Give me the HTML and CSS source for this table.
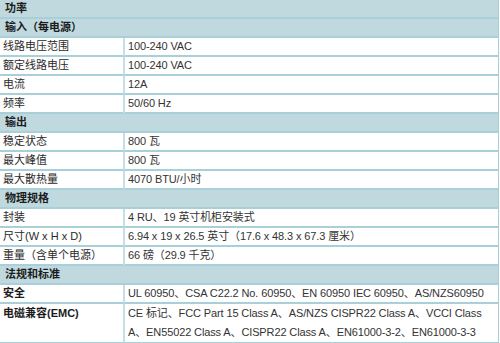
FILE: index.html
```html
<!DOCTYPE html>
<html lang="zh-CN">
<head>
    <meta charset="UTF-8">
    <title>功率规格</title>
    <link rel="stylesheet" href="styles.css">
</head>
<body>
    <table class="spec">
        <tr class="section"><td colspan="2">功率</td></tr>
        <tr class="section"><td colspan="2">输入（每电源）</td></tr>
        <tr><td class="label">线路电压范围</td><td class="value">100-240 VAC</td></tr>
        <tr><td class="label">额定线路电压</td><td class="value">100-240 VAC</td></tr>
        <tr><td class="label">电流</td><td class="value">12A</td></tr>
        <tr><td class="label">频率</td><td class="value">50/60 Hz</td></tr>
        <tr class="section"><td colspan="2">输出</td></tr>
        <tr><td class="label">稳定状态</td><td class="value">800 瓦</td></tr>
        <tr><td class="label">最大峰值</td><td class="value">800 瓦</td></tr>
        <tr><td class="label">最大散热量</td><td class="value">4070 BTU/小时</td></tr>
        <tr class="section"><td colspan="2">物理规格</td></tr>
        <tr><td class="label">封装</td><td class="value">4 RU、19 英寸机柜安装式</td></tr>
        <tr><td class="label">尺寸(W x H x D)</td><td class="value">6.94 x 19 x 26.5 英寸（17.6 x 48.3 x 67.3 厘米）</td></tr>
        <tr><td class="label">重量（含单个电源）</td><td class="value">66 磅（29.9 千克）</td></tr>
        <tr class="section"><td colspan="2">法规和标准</td></tr>
        <tr><td class="label strong">安全</td><td class="value">UL 60950、CSA C22.2 No. 60950、EN 60950 IEC 60950、AS/NZS60950</td></tr>
        <tr class="tall"><td class="label strong">电磁兼容(EMC)</td><td class="value">CE 标记、FCC Part 15 Class A、AS/NZS CISPR22 Class A、VCCI Class<br>A、EN55022 Class A、CISPR22 Class A、EN61000-3-2、EN61000-3-3</td></tr>
    </table>
</body>
</html>
```

FILE: styles.css
```css
body {
    margin: 0;
    padding: 0;
    background: #fff;
    font-family: "Liberation Sans", "Noto Sans CJK SC", sans-serif;
    font-size: 11px;
    color: #2a2a2a;
}
.spec {
    width: 499px;
    border-collapse: separate;
    border-spacing: 0;
    border-right: 1px solid #a9cdd6;
}
.spec td {
    height: 17px;
    line-height: 17px;
    padding: 0 3px;
    border-bottom: 2px solid #a9cfd8;
    vertical-align: middle;
    white-space: nowrap;
}
.section td {
    background: #bfd9df;
    font-weight: bold;
    color: #1c1c1c;
    padding-left: 5px;
}
.label {
    width: 117px;
    border-right: 2px solid #c4dfe6;
}
.label.strong {
    font-weight: bold;
    color: #1c1c1c;
}
.value {
    padding-left: 2px;
    color: #333;
    letter-spacing: -0.12px;
}
.tall td {
    height: 37px;
    line-height: 19px;
    vertical-align: top;
}
```
